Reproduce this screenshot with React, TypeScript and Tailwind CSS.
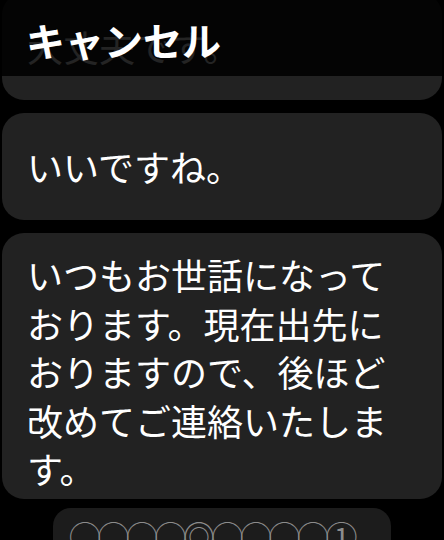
import React from 'react';

const replies = [
  { id: 'ok', text: '大丈夫です。', className: 'h-[107px] flex items-center' },
  { id: 'nice', text: 'いいですね。', className: 'h-[107px] flex items-center' },
  {
    id: 'busy',
    text: 'いつもお世話になっております。現在出先におりますので、後ほど改めてご連絡いたします。',
    className: 'pt-[17px] pb-[6px]',
  },
];

export default function App() {
  return (
    <div
      className="relative w-[444px] h-[540px] overflow-hidden bg-black text-white"
      style={{ fontFamily: '"Noto Sans CJK JP", "Noto Sans", sans-serif' }}
    >
      <div className="flex flex-col gap-[13px] mt-[-7px] px-[2px]">
        {replies.map((r) => (
          <div key={r.id} className={`rounded-[22px] bg-[#222222] px-[25px] ${r.className}`}>
            <p className="w-[380px] text-[36px] leading-[48.5px] break-all">{r.text}</p>
          </div>
        ))}
        <div className="mx-[51px] -mt-[4px] h-[60px] rounded-[18px] bg-[#1c1c1c] pl-[16px] pt-[8px]">
          <p className="text-[32px] leading-[38px] text-[#8c8c8c] tracking-[-3.5px] whitespace-nowrap">
            ◯◯◯◯◎◯◯◯◯①
          </p>
        </div>
      </div>

      {/* title bar over the scrolled list */}
      <div className="absolute top-0 left-0 right-0 h-[76px] bg-black/[0.86]">
        <h1 className="pl-[26px] pt-[16px] text-[39px] leading-[46px] font-bold">キャンセル</h1>
      </div>
    </div>
  );
}
